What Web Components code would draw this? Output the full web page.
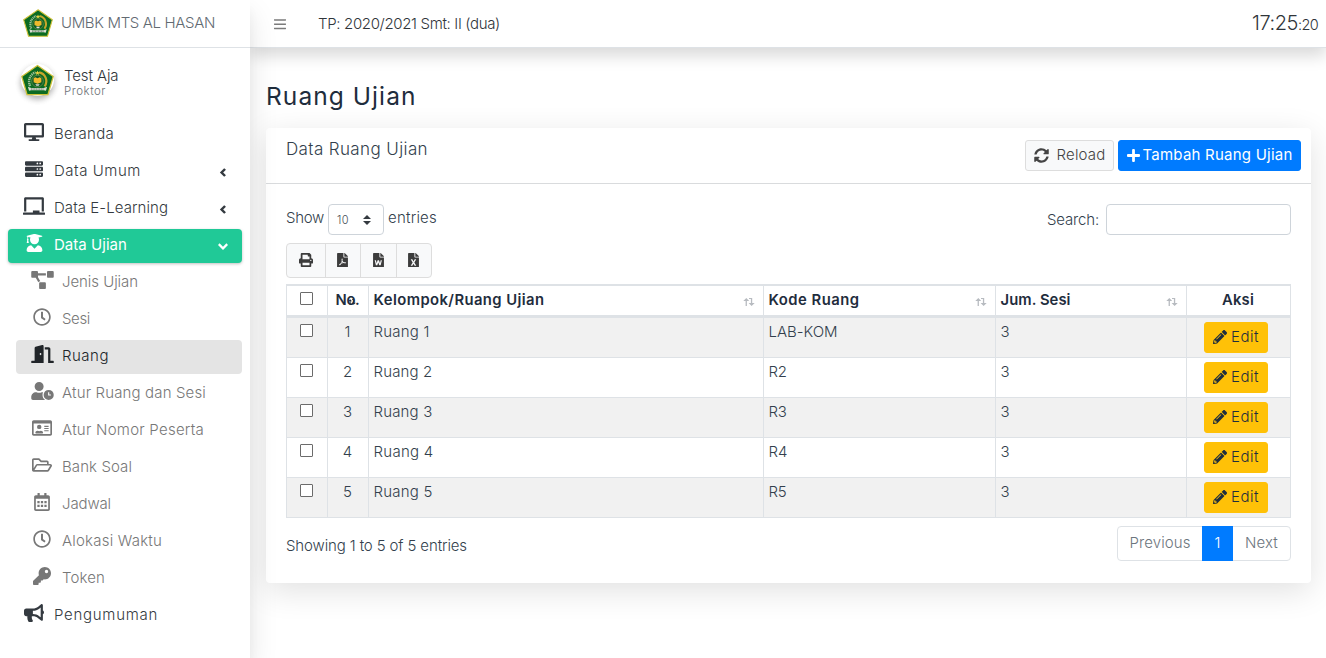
<!DOCTYPE html>
<html lang="id">
<head>
<meta charset="utf-8">
<title>Ruang Ujian</title>
<style>
html,body{margin:0;height:100%;overflow:hidden}
body{font:300 15px/22px Inter,"Open Sans",sans-serif;color:#30353a;background:#fff}
</style>
</head>
<body>
<exam-app></exam-app>
<script>
const ICONS = {
desktop:['0 0 576 512','M528 0H48C21.500 0 0 21.500 0 48v320c0 26.500 21.500 48 48 48h192l-16 48h-72c-13.300 0-24 10.700-24 24s10.700 24 24 24h272c13.300 0 24-10.700 24-24s-10.700-24-24-24h-72l-16-48h192c26.500 0 48-21.500 48-48V48c0-26.500-21.500-48-48-48zm-16 352H64V64h448v288z'],
server:['0 0 512 512','M480 160H32C14 160 0 146 0 128V64c0-18 14-32 32-32h448c18 0 32 14 32 32v64c0 18-14 32-32 32zm-48-88a24 24 0 1 0 0 48 24 24 0 0 0 0-48zm-80 0a24 24 0 1 0 0 48 24 24 0 0 0 0-48zM480 320H32c-18 0-32-14-32-32v-64c0-18 14-32 32-32h448c18 0 32 14 32 32v64c0 18-14 32-32 32zm-48-88a24 24 0 1 0 0 48 24 24 0 0 0 0-48zm-80 0a24 24 0 1 0 0 48 24 24 0 0 0 0-48zM480 480H32c-18 0-32-14-32-32v-64c0-18 14-32 32-32h448c18 0 32 14 32 32v64c0 18-14 32-32 32zm-48-88a24 24 0 1 0 0 48 24 24 0 0 0 0-48zm-80 0a24 24 0 1 0 0 48 24 24 0 0 0 0-48z'],
laptop:['0 0 640 512','M96 64h448v352h64V40c0-22-18-40-40-40H72C50 0 32 18 32 40v376h64V64zm528 384H480v-64H288v64H16c-9 0-16 7-16 16v32c0 9 7 16 16 16h608c9 0 16-7 16-16v-32c0-9-7-16-16-16z'],
grad:['0 0 448 512','M319.400 320.600L224 416l-95.400-95.400C57.100 323.700 0 382.200 0 454.400v9.600c0 26.500 21.500 48 48 48h352c26.500 0 48-21.500 48-48v-9.600c0-72.200-57.100-130.700-128.600-133.800zM13.600 79.800l6.400 1.500v58.400c-7 4.200-12 11.500-12 20.300 0 8.400 4.600 15.400 11.100 19.700L3.500 242c-1.700 6.900 2.100 14 7.600 14h41.800c5.500 0 9.300-7.100 7.600-14l-15.600-62.300C51.400 175.400 56 168.400 56 160c0-8.800-5-16.100-12-20.300V87.100l66 15.900c-8.600 17.200-14 36.400-14 57 0 70.700 57.300 128 128 128s128-57.300 128-128c0-20.600-5.300-39.800-14-57l96.300-23.200c18.200-4.400 18.200-27.100 0-31.500l-190.400-46c-13-3.100-26.700-3.100-39.700 0L13.600 48.200c-18.100 4.400-18.100 27.200 0 31.600z'],
project:['0 0 640 512','M384 320H256c-18 0-32 14-32 32v128c0 18 14 32 32 32h128c18 0 32-14 32-32V352c0-18-14-32-32-32zM192 32c0-18-14-32-32-32H32C14 0 0 14 0 32v128c0 18 14 32 32 32h96l73 127c11-19 32-31 55-31h1L192 176v-48h224V64H192V32zM608 0H480c-18 0-32 14-32 32v128c0 18 14 32 32 32h128c18 0 32-14 32-32V32c0-18-14-32-32-32z'],
clock:['0 0 512 512','M256 8C119 8 8 119 8 256s111 248 248 248 248-111 248-248S393 8 256 8zm0 448c-110.500 0-200-89.500-200-200S145.500 56 256 56s200 89.500 200 200-89.500 200-200 200zm61.800-104.400l-84.900-61.700c-3.100-2.300-4.900-5.900-4.900-9.700V116c0-6.600 5.400-12 12-12h32c6.600 0 12 5.400 12 12v141.700l66.800 48.600c5.400 3.900 6.500 11.400 2.600 16.800L334.600 349c-3.900 5.300-11.400 6.500-16.800 2.600z'],
door:['0 0 640 512','M624 448h-80V113.500C544 86.200 522.500 64 496 64H384v64h96v384h144c8.800 0 16-7.200 16-16v-32c0-8.800-7.200-16-16-16zM312.200 1l-192 49.900C106 54.600 96 67.700 96 82.700V448H16c-8.800 0-16 7.200-16 16v32c0 8.800 7.200 16 16 16h336V33.200c0-21.600-19.600-37.500-39.800-32.200zM264 288c-13.300 0-24-14.300-24-32s10.700-32 24-32 24 14.300 24 32-10.700 32-24 32z'],
userclock:['0 0 640 512','M496 224a144 144 0 1 0 0 288 144 144 0 0 0 0-288zm64 150c0 5.500-4.500 10-10 10h-60c-5.500 0-10-4.500-10-10v-76c0-5.500 4.500-10 10-10h12c5.500 0 10 4.500 10 10v54h38c5.500 0 10 4.500 10 10v12zM320 368c0-27.800 6.700-54.100 18.200-77.500-8-1.500-16.200-2.500-24.600-2.500h-16.700c-22.200 10.200-46.900 16-72.900 16s-50.600-5.800-72.900-16h-16.700C60.200 288 0 348.200 0 422.400V464c0 26.500 21.500 48 48 48h347.100c-45.300-31.900-75.100-84.500-75.100-144zM224 256a128 128 0 1 0 0-256 128 128 0 0 0 0 256z'],
card:['0 0 576 512','M528 32H48C21.500 32 0 53.500 0 80v352c0 26.500 21.500 48 48 48h480c26.500 0 48-21.500 48-48V80c0-26.500-21.500-48-48-48zm0 400H48V128h480v304zM208 288a64 64 0 1 0 0-128 64 64 0 0 0 0 128zm-90 128h180c12 0 22-9 22-20 0-32-30-58-67-58-11 0-19 8-45 8s-35-8-45-8c-37 0-67 26-67 58 0 11 10 20 22 20zm242-64h112c4 0 8-4 8-8v-16c0-4-4-8-8-8H360c-4 0-8 4-8 8v16c0 4 4 8 8 8zm0-64h112c4 0 8-4 8-8v-16c0-4-4-8-8-8H360c-4 0-8 4-8 8v16c0 4 4 8 8 8zm0-64h112c4 0 8-4 8-8v-16c0-4-4-8-8-8H360c-4 0-8 4-8 8v16c0 4 4 8 8 8z'],
folder:['0 0 576 512','M527.900 224H480v-48c0-26.500-21.500-48-48-48H272l-64-64H48C21.500 64 0 85.500 0 112v288c0 26.500 21.500 48 48 48h400c16.500 0 31.900-8.500 40.700-22.600l79.900-128c20-31.900-3-73.400-40.700-73.400zM48 118c0-3.300 2.700-6 6-6h134.100l64 64H426c3.300 0 6 2.700 6 6v42H152c-16.800 0-32.400 8.800-41.100 23.200L48 351.400zm400 282H72l77.200-128H528z'],
calendar:['0 0 448 512','M400 64h-48V12c0-6.600-5.400-12-12-12h-40c-6.600 0-12 5.400-12 12v52H160V12c0-6.600-5.400-12-12-12h-40c-6.600 0-12 5.400-12 12v52H48C21.500 64 0 85.500 0 112v352c0 26.500 21.500 48 48 48h352c26.500 0 48-21.500 48-48V112c0-26.500-21.500-48-48-48zm0 394c0 3-3 6-6 6H54c-3 0-6-3-6-6V160h352v298zM92 228h64v64H92zm100 0h64v64h-64zm100 0h64v64h-64zM92 336h64v64H92zm100 0h64v64h-64zm100 0h64v64h-64z'],
key:['0 0 512 512','M512 176c0 97.200-78.800 176-176 176-11.200 0-22.200-1.100-32.800-3.100l-24 27a24 24 0 0 1-18 8.100H224v40c0 13.300-10.700 24-24 24h-40v40c0 13.300-10.700 24-24 24H24c-13.300 0-24-10.700-24-24v-78c0-6.400 2.500-12.500 7-17l161.800-161.800C162.900 213.800 160 195.300 160 176 160 78.800 238.800 0 336 0s176 78.500 176 176zm-176-48a48 48 0 1 0 96 0 48 48 0 0 0-96 0z'],
horn:['0 0 576 512','M576 240c0-23.600-13-44-32-55V32c0-8.700-7-32-32-32-7 0-14 2.400-20 7l-85 68c-42.700 34.200-96.300 53-151 53H64c-35.300 0-64 28.700-64 64v96c0 35.300 28.700 64 64 64h33.700c-1.400 10.500-2.200 21.100-2.200 32 0 39.800 9.300 77.400 25.600 110.900 5.200 10.700 16.500 17.100 28.400 17.100h74.300c26 0 41.700-29.800 25.900-50.400-16.400-21.500-26.200-48.400-26.200-77.600 0-11.100 1.600-21.800 4.400-32H256c54.700 0 108.300 18.800 151 53l85 68c6 4.800 13 7 20 7 24.900 0 32-22.800 32-32V295c19-11 32-31.400 32-55zm-96 141l-33-26c-54-43.300-122-67-191-67v-96c69 0 137-23.700 191-67l33-26v282z'],
left:['0 0 10 10','M6.300.3L8.300 2 5.200 5l3.100 3-2 1.700L1.500 5z'],
down:['0 0 10 8','M1.600.8L5 4.200 8.400.8 10 2.500 5 7.400 0 2.500z'],
bars:['0 0 448 512','M16 132h416c9 0 16-7 16-16V92c0-9-7-16-16-16H16C7 76 0 83 0 92v24c0 9 7 16 16 16zm0 160h416c9 0 16-7 16-16v-24c0-9-7-16-16-16H16c-9 0-16 7-16 16v24c0 9 7 16 16 16zm0 160h416c9 0 16-7 16-16v-24c0-9-7-16-16-16H16c-9 0-16 7-16 16v24c0 9 7 16 16 16z'],
sync:['0 0 512 512','M370.700 133.300C339.500 104 298.900 88 255.800 88c-77.500.1-144.300 53.200-162.800 126.900-1.300 5.400-6.100 9.100-11.700 9.100H24.100c-7.500 0-13.200-6.800-11.800-14.200C33.900 94.900 134.800 8 256 8c66.400 0 126.800 26.100 171.300 68.700L463 41c15.100-15.100 41-4.400 41 17v134c0 13.300-10.700 24-24 24H346c-21.400 0-32.100-25.900-17-41l41.700-41.700zM32 296h134c21.400 0 32.100 25.900 17 41l-41.800 41.800c31.300 29.300 71.800 45.300 115 45.300 77.400-.1 144.300-53.100 162.800-126.900 1.300-5.400 6.100-9.100 11.700-9.100h57.300c7.500 0 13.200 6.800 11.800 14.200C478.100 417.100 377.200 504 256 504c-66.400 0-126.800-26.100-171.300-68.700L49 471c-15.100 15.100-41 4.400-41-17V320c0-13.300 10.700-24 24-24z'],
plus:['0 0 448 512','M416 208H272V64c0-18-14-32-32-32h-32c-18 0-32 14-32 32v144H32c-18 0-32 14-32 32v32c0 18 14 32 32 32h144v144c0 18 14 32 32 32h32c18 0 32-14 32-32V304h144c18 0 32-14 32-32v-32c0-18-14-32-32-32z'],
print:['0 0 512 512','M448 192V77.300c0-8.500-3.400-16.600-9.400-22.600L393.400 9.400c-6-6-14.100-9.400-22.600-9.400H96C78.300 0 64 14.300 64 32v160c-35.300 0-64 28.700-64 64v112c0 8.800 7.200 16 16 16h48v96c0 17.700 14.300 32 32 32h320c17.700 0 32-14.300 32-32v-96h48c8.800 0 16-7.200 16-16V256c0-35.300-28.700-64-64-64zm-64 256H128v-96h256v96zm0-224H128V64h192v48c0 8.800 7.200 16 16 16h48v96zm48 72a24 24 0 1 1 0-48 24 24 0 0 1 0 48z'],
pdf:['0 0 384 512','M224 136V0H24C11 0 0 11 0 24v464c0 13 11 24 24 24h336c13 0 24-11 24-24V160H248c-13 0-24-11-24-24zm160-14v6H256V0h6c6 0 12 3 17 7l98 98c4 5 7 11 7 17zM181 195c20 0 22 30 8 74 12 26 28 44 48 56 42-6 83-3 83 20 0 28-46 26-91 6-27 5-50 12-73 22-29 51-58 70-75 58-20-17 3-48 49-72 17-31 29-58 36-85-13-36-8-79 15-79zm-7 112c-6 18-13 32-20 45 16-6 31-10 46-13-11-9-19-19-26-32z'],
word:['0 0 384 512','M224 136V0H24C11 0 0 11 0 24v464c0 13 11 24 24 24h336c13 0 24-11 24-24V160H248c-13 0-24-11-24-24zm160-14v6H256V0h6c6 0 12 3 17 7l98 98c4 5 7 11 7 17zM58 256h44l22 108 38-108h46l36 108 24-108h44l-44 180h-48l-36-102-36 102h-48z'],
excel:['0 0 384 512','M224 136V0H24C11 0 0 11 0 24v464c0 13 11 24 24 24h336c13 0 24-11 24-24V160H248c-13 0-24-11-24-24zm160-14v6H256V0h6c6 0 12 3 17 7l98 98c4 5 7 11 7 17zM94 224h56l42 74 42-74h56l-68 112 68 112h-56l-42-72-42 72H94l68-112z'],
pencil:['0 0 512 512','M498 142l-46.600 46.600c-4.700 4.700-12.300 4.700-17 0L323.500 77.700c-4.700-4.700-4.700-12.300 0-17L370.100 14c18.700-18.700 49.100-18.700 67.900 0l60.100 60.100c18.600 18.700 18.600 49.100-.1 67.900zm-214.200-42.100L21.700 362 .3 483.600c-3 16.400 11.300 30.600 27.700 27.700l121.600-21.400L411.700 228c4.700-4.700 4.700-12.300 0-17L300.800 99.900c-4.800-4.700-12.400-4.700-17 0zM124.100 339.900c-5.500-5.500-5.500-14.300 0-19.800l154-154c5.500-5.500 14.300-5.500 19.800 0s5.500 14.300 0 19.800l-154 154c-5.500 5.500-14.300 5.500-19.800 0zM88 424h48v36.300l-64.500 11.300-31.100-31.100L51.700 376H88v48z'],
arrows:['0 0 12 8','M2.600 8V3H.3L3.300 0 6 2.700V3H3.900v5zM6 0h3.200v5h2.500L8.600 8 5.600 5H7.900V1H6z'],
updown:['0 0 8 10','M0 4l4-4 4 4zm0 2h8l-4 4z']
};

const define = (name, css, html, after) => customElements.define(name, class extends HTMLElement {
  connectedCallback() {
    if (this.shadowRoot) return;
    const root = this.attachShadow({mode:'open'});
    const t = document.createElement('template');
    t.innerHTML = '<style>*{box-sizing:border-box}' + css + '</style>' + (typeof html === 'function' ? html(this) : html);
    root.append(t.content.cloneNode(true));
    if (after) after(this, root);
  }
});

define('exam-app', `
:host{display:grid;grid-template-columns:250px 1fr;height:658px}
app-sidebar{z-index:3}
main{display:flex;flex-direction:column;min-width:0}
h1{margin:0;padding:32px 16px 16px;font:400 24.500px/32px Inter,sans-serif;color:#1f2d3d}
data-card{margin:0 15px 0 16px}`,
`<app-sidebar></app-sidebar><main><top-bar></top-bar><h1><fit-text w="150.500">Ruang Ujian</fit-text></h1><data-card></data-card></main>`);

define('top-bar', `
:host{display:flex;align-items:center;height:48px;flex:none;border-bottom:1px solid #dee2e6;padding:0 8px 0 24px;background:#fff;box-shadow:0 8px 16px rgba(0,0,0,.15);position:relative;z-index:2;box-sizing:border-box}
fa-icon{color:#7b7b7b;margin-right:32px}.clock{margin-left:auto;font-size:20px;display:flex;align-items:baseline}.clock small{font-size:14.500px}`,
`<fa-icon n="bars" w="12" h="14" box="12"></fa-icon><fit-text w="182">TP: 2020/2021 Smt: II (dua)</fit-text><div class="clock"><fit-text w="46">17:25</fit-text><small><fit-text w="20">:20</fit-text></small></div>`);

define('kemenag-logo', `:host{display:block;flex:none}svg{display:block;width:100%;height:100%}`,
`<svg viewBox="0 0 30 28"><path d="M15 .8L29.300 10.800 24.500 27.200H5.500L.7 10.800z" fill="#0b6b22" stroke="#d0c23a" stroke-width="1.100"/><path d="M8.300 19.500C5.800 14 8.500 8.800 13.300 7" fill="none" stroke="#9dbd97" stroke-width="2.200" stroke-dasharray="1.200 .6"/><path d="M16.500 7c6 1.200 8.300 8 5 12.800" fill="none" stroke="#c6a52c" stroke-width="2"/><circle cx="15" cy="15" r="5.300" fill="#0f5c25" stroke="#78965b" stroke-width=".6"/><path d="M15 5.500l.7 1.500h1.500L16 8l.5 1.500-1.500-1-1.500 1L14 8l-1.200-1h1.500z" fill="#ead342"/><path d="M11.500 12.500l1.500-1 2 .8 2-.8 1.500 1v3.500l-3.500 1.500-3.500-1.500z" fill="#f0b92c"/><path d="M13 17.800h4l-1 1.500h-2z" fill="#ddd"/><path d="M6.300 20.200l3 1h11.400l3-1-1 3.600-2-.5H9.300l-2 .5z" fill="#d9dfd2"/><path d="M9 22.200h12" stroke="#51634f" stroke-width=".8" stroke-dasharray="1 .5"/></svg>`);

define('app-sidebar', `
:host{display:block;width:250px;height:658px;background:#fff;box-shadow:0 14px 28px rgba(0,0,0,.11),0 10px 10px rgba(0,0,0,.04)}
.brand{height:48px;display:flex;align-items:center;border-bottom:1px solid #dee2e6;padding-left:23px;color:#626a72}.brand kemenag-logo{width:30px;height:28px;margin:-2px 8px 0 0}.brand fit-text{margin-top:-1px}
.user{height:70px;display:flex;padding:16px 0 0 21px}.user kemenag-logo{width:33px;height:32px;border-radius:50%;box-shadow:0 3px 6px rgba(0,0,0,.23),0 3px 6px rgba(0,0,0,.12)}
.name{padding-left:10px;line-height:16px;padding-top:4px}.name div{height:16px}.name small{display:block;font-size:11.500px;line-height:14px;color:#6c7075}
nav{display:flex;flex-direction:column;gap:3px;padding:0 8px}.group{display:flex;flex-direction:column;gap:3px;padding-left:8px}`,
`<div class="brand"><kemenag-logo></kemenag-logo><fit-text w="154">UMBK MTS AL HASAN</fit-text></div>
<div class="user"><kemenag-logo></kemenag-logo><div class="name"><div><fit-text w="54.500">Test Aja</fit-text></div><small><fit-text w="42">Proktor</fit-text></small></div></div>
<nav>
<nav-item icon="desktop" iw="20"><fit-text w="60">Beranda</fit-text></nav-item>
<nav-item icon="server" iw="18" arrow="left"><fit-text w="87">Data Umum</fit-text></nav-item>
<nav-item icon="laptop" iw="22" arrow="left"><fit-text w="114">Data E-Learning</fit-text></nav-item>
<nav-item icon="grad" iw="17" arrow="down" class="active"><fit-text w="73">Data Ujian</fit-text></nav-item>
<div class="group">
<nav-item class="sub" icon="project" iw="23"><fit-text w="76">Jenis Ujian</fit-text></nav-item>
<nav-item class="sub" icon="clock" iw="18"><fit-text w="28">Sesi</fit-text></nav-item>
<nav-item class="sub current" icon="door" iw="23"><fit-text w="47">Ruang</fit-text></nav-item>
<nav-item class="sub" icon="userclock" iw="23"><fit-text w="144">Atur Ruang dan Sesi</fit-text></nav-item>
<nav-item class="sub" icon="card" iw="20"><fit-text w="142">Atur Nomor Peserta</fit-text></nav-item>
<nav-item class="sub" icon="folder" iw="20"><fit-text w="70">Bank Soal</fit-text></nav-item>
<nav-item class="sub" icon="calendar" iw="16"><fit-text w="49">Jadwal</fit-text></nav-item>
<nav-item class="sub" icon="clock" iw="18"><fit-text w="100">Alokasi Waktu</fit-text></nav-item>
<nav-item class="sub" icon="key" iw="18"><fit-text w="43">Token</fit-text></nav-item>
</div>
<nav-item icon="horn" iw="20"><fit-text w="104">Pengumuman</fit-text></nav-item>
</nav>`);

define('nav-item', `
:host{display:flex;align-items:center;height:34px;padding:0 14px 5px 14px;border-radius:4px;color:#343a40;flex:none;box-sizing:border-box}
:host(.active){background:#20c997;color:#fff;font-weight:400;box-shadow:0 1px 3px rgba(0,0,0,.25)}
:host(.sub){color:#777}:host(.current){background:#e4e4e4;color:#212529}
.i{margin:-2px 7.500px 0 -.5px}:host(.sub) .i{margin-top:-1px}.a{margin:6px 0 0 auto}slot{display:block;position:relative;top:1px}`,
e => `<fa-icon class="i" n="${e.getAttribute('icon')}" w="${e.getAttribute('iw')}" h="18" box="25"></fa-icon><slot></slot>${e.hasAttribute('arrow') ? `<fa-icon class="a" n="${e.getAttribute('arrow')}" w="10" h="9" box="11"></fa-icon>` : ''}`);

define('data-card', `
:host{display:block;height:455px;background:#fff;border-radius:4px;box-shadow:0 8px 32px rgba(0,0,0,.12);color:#333f4d;flex:none}
header{height:56px;border-bottom:1px solid #d9dbdd;display:flex;padding:12px 10px 0 20px;gap:4px}.title{font-size:17px;line-height:20px;margin-right:auto;margin-top:-1px}
ui-button.add{width:183px;--bg:#007bff;--bd:#007bff;color:#fff;font-weight:400}ui-button.reload{width:89px;--bg:#f8f9fa;--bd:#ddd;color:#444}
.body{padding:20px 20px 0}.tools{display:flex;height:39px}.tools .l{padding-top:3px;margin-right:4px}.sel{display:flex;align-items:center;justify-content:space-between;width:56px;height:31px;border:1px solid #ced4da;border-radius:4px;padding:0 12px 0 8px;font-size:11px;color:#495057;margin-right:4px}.s{margin:5px 7px 0 auto}.input{width:185px;height:31px;border:1px solid #ced4da;border-radius:4px}
.foot{display:flex;justify-content:space-between;padding-top:8px}.info{padding-top:9px}
.pages{display:flex;height:35px;width:174px;border:1px solid #dee2e6;border-radius:4px;line-height:32px;color:#6c757d}.pages div{text-align:center;width:84px}.pages .on{width:31px;margin:-1px 0;background:#007bff;color:#fff;line-height:34px}.pages div:last-child{width:57px}`,
`<header><div class="title"><fit-text w="142">Data Ruang Ujian</fit-text></div>
<ui-button class="reload"><fa-icon n="sync" w="15" h="15" box="15" style="margin-right:8px"></fa-icon><fit-text w="49">Reload</fit-text></ui-button>
<ui-button class="add"><fa-icon n="plus" w="13" h="15" box="13" style="margin-right:3px"></fa-icon><fit-text w="150">Tambah Ruang Ujian</fit-text></ui-button></header>
<div class="body"><div class="tools"><span class="l"><fit-text w="38">Show</fit-text></span><div class="sel"><fit-text w="12">10</fit-text><fa-icon n="updown" w="8" h="10" box="8" style="color:#343a40"></fa-icon></div><span class="l"><fit-text w="49">entries</fit-text></span><span class="s"><fit-text w="52">Search:</fit-text></span><div class="input"></div></div>
<export-bar></export-bar><room-table></room-table>
<div class="foot"><span class="info"><fit-text w="181">Showing 1 to 5 of 5 entries</fit-text></span><div class="pages"><div><fit-text w="61">Previous</fit-text></div><div class="on">1</div><div><fit-text w="33">Next</fit-text></div></div></div></div>`);

define('ui-button', `:host{display:flex;align-items:center;justify-content:center;height:31px;border-radius:3px;background:var(--bg);border:1px solid var(--bd);box-sizing:border-box}::slotted(fit-text){margin-top:-2px}::slotted(fa-icon){margin-top:-1px}`, `<slot></slot>`);

define('export-bar', `:host{display:flex;width:146px;height:35px;border:1px solid #ddd;border-radius:4px;background:#f8f9fa;color:#3c3c3c;box-sizing:border-box;margin-bottom:6px}
div{display:flex;align-items:center;justify-content:center;width:35px;border-left:1px solid #ddd;padding:0 1px 1px 0}div:first-of-type{width:38px;border:0}div:nth-of-type(3){width:36px}`,
`<div><fa-icon n="print" w="14" h="14" box="14"></fa-icon></div><div><fa-icon n="pdf" w="11" h="14.500" box="11"></fa-icon></div><div><fa-icon n="word" w="11" h="14.500" box="11"></fa-icon></div><div><fa-icon n="excel" w="11" h="14.500" box="11"></fa-icon></div>`);

const ROOMS = [['Ruang 1','LAB-KOM',56,69],['Ruang 2','R2',59,18],['Ruang 3','R3',59,18],['Ruang 4','R4',60,19],['Ruang 5','R5',59,18]];
define('room-table', `
:host{display:block}
.r{display:grid;grid-template-columns:41px 41px 395px 232px 191px 105px;height:40px}
.r>div{border-left:1px solid #dee2e6;border-bottom:1px solid #dee2e6;padding:3px 4px 0 4.500px;min-width:0}
.r>div:last-child{border-right:1px solid #dee2e6}.r:nth-of-type(even){background:#f1f1f1}
.r>.h{border-top:2px solid #dee2e6;border-bottom:3px solid #dee2e6;font-size:14.800px;font-weight:600;color:#1f2d3d;display:flex;justify-content:space-between;padding:3px 8px 0 4.500px}.r.head{height:34px}
.r>.c{text-align:center;justify-content:center;padding-left:0;padding-right:1px}.r>.c:first-child{padding-right:2px}.box{display:block;width:13px;height:13px;border:1px solid #6b6b6b;border-radius:1px;background:#fff;margin:3px auto 0}
.h>fa-icon{color:#b7bbc0;height:8px;margin-top:9px}.no{position:relative}.r .no fa-icon{position:absolute;right:12px;top:3px;color:#1f2d3d}
.r>.act{padding:4px 22px 0 17px}ui-button{--bg:#ffc107;--bd:#ffc107;color:#1f2d3d}`,
`<div class="r head"><div class="h c"><i class="box"></i></div><div class="h c no"><fit-text w="24">No.</fit-text><fa-icon n="arrows" w="8" h="6" box="8"></fa-icon></div>
<div class="h"><fit-text w="171">Kelompok/Ruang Ujian</fit-text><fa-icon n="arrows" w="12" h="8" box="12"></fa-icon></div><div class="h"><fit-text w="91">Kode Ruang</fit-text><fa-icon n="arrows" w="12" h="8" box="12"></fa-icon></div><div class="h"><fit-text w="70">Jum. Sesi</fit-text><fa-icon n="arrows" w="12" h="8" box="12"></fa-icon></div><div class="h c"><fit-text w="32">Aksi</fit-text></div></div>` +
ROOMS.map((r,i) => `<div class="r"><div class="c"><i class="box"></i></div><div class="c">${i+1}</div><div><fit-text w="${r[2]}">${r[0]}</fit-text></div><div><fit-text w="${r[3]}">${r[1]}</fit-text></div><div>3</div><div class="act"><ui-button><fa-icon n="pencil" w="14" h="14" box="14" style="margin-right:4px"></fa-icon><fit-text w="28">Edit</fit-text></ui-button></div></div>`).join(''));

define('fa-icon', `:host{display:flex;align-items:center;justify-content:center;flex:none}svg{display:block;fill:currentColor;fill-rule:evenodd;flex:none}`,
e => { const [v,d] = ICONS[e.getAttribute('n')]; return `<svg width="${e.getAttribute('w')}" height="${e.getAttribute('h')}" viewBox="${v}"><path d="${d}"/></svg>`; },
e => { e.style.width = e.getAttribute('box') + 'px'; });

/* Spreads its text over a set width by letter spacing. */
define('fit-text', `:host{display:inline-block;white-space:nowrap}`, `<span><slot></slot></span>`, (e, root) => {
  const s = root.querySelector('span'), w = +e.getAttribute('w');
  s.style.letterSpacing = (w - s.getBoundingClientRect().width) / e.textContent.length + 'px';
});
</script>
</body>
</html>
